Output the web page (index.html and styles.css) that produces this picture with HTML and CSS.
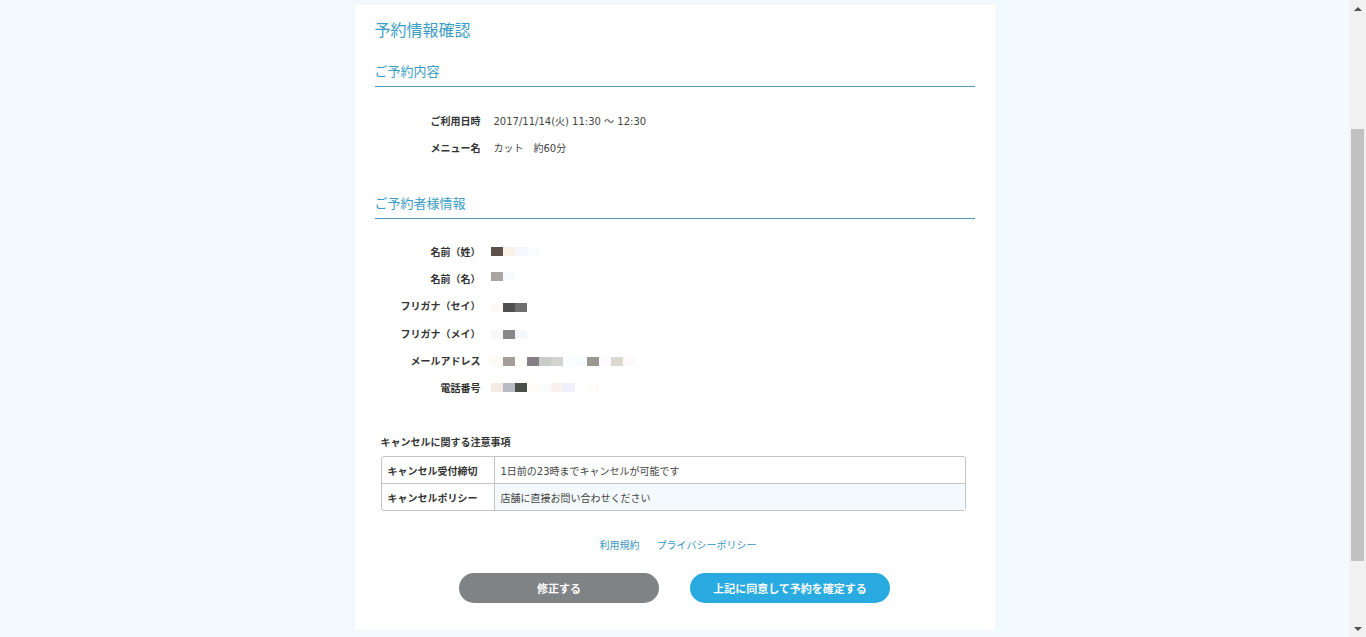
FILE: index.html
```html
<!DOCTYPE html>
<html lang="ja">
<head>
    <meta charset="UTF-8">
    <meta name="viewport" content="width=device-width, initial-scale=1.0">
    <title>予約情報確認</title>
    <link rel="stylesheet" href="styles.css">
</head>
<body>
    <div class="page">
        <div class="card">
            <h1>予約情報確認</h1>

            <h2>ご予約内容</h2>
            <dl class="info">
                <div class="row"><dt>ご利用日時</dt><dd>2017/11/14(火) 11:30 ～ 12:30</dd></div>
                <div class="row"><dt>メニュー名</dt><dd>カット　約60分</dd></div>
            </dl>

            <h2 class="second">ご予約者様情報</h2>
            <dl class="info customer">
                <div class="row"><dt>名前（姓）</dt><dd><span class="mosaic"><i style="background:#5b514a"></i><i style="background:#faf2e6"></i><i style="background:#f4f7fc"></i><i style="background:#fafbfd"></i></span></dd></div>
                <div class="row"><dt>名前（名）</dt><dd><span class="mosaic high"><i style="background:#aaa5a1"></i><i style="background:#f8fafc"></i></span></dd></div>
                <div class="row"><dt>フリガナ（セイ）</dt><dd><span class="mosaic low"><i style="background:#fbfaf8"></i><i style="background:#505050"></i><i style="background:#6f6f6f"></i></span></dd></div>
                <div class="row"><dt>フリガナ（メイ）</dt><dd><span class="mosaic low"><i style="background:#f8f8fa"></i><i style="background:#888888"></i><i style="background:#f3f6fa"></i></span></dd></div>
                <div class="row"><dt>メールアドレス</dt><dd><span class="mosaic low"><i style="background:#fdf9f3"></i><i style="background:#a59e98"></i><i style="background:#fffdf8"></i><i style="background:#847f84"></i><i style="background:#c9ccc6"></i><i style="background:#d4d4d0"></i><i style="background:#fcfdfe"></i><i style="background:#f8fbfd"></i><i style="background:#9a9791"></i><i style="background:#fdfbfd"></i><i style="background:#dcd8cf"></i><i style="background:#fcf8fb"></i></span></dd></div>
                <div class="row"><dt>電話番号</dt><dd><span class="mosaic"><i style="background:#f6ece3"></i><i style="background:#b9bac6"></i><i style="background:#4b4f47"></i><i style="background:#fffcf5"></i><i style="background:#fafcfc"></i><i style="background:#fbf2ef"></i><i style="background:#eef0fc"></i><i style="background:#ffffff"></i><i style="background:#fdfcfa"></i></span></dd></div>
            </dl>

            <div class="notice">
                <h3>キャンセルに関する注意事項</h3>
                <table class="cancel">
                    <tr>
                        <th>キャンセル受付締切</th>
                        <td>1日前の23時までキャンセルが可能です</td>
                    </tr>
                    <tr class="alt">
                        <th>キャンセルポリシー</th>
                        <td>店舗に直接お問い合わせください</td>
                    </tr>
                </table>
            </div>

            <div class="links">
                <a href="#">利用規約</a>
                <a href="#">プライバシーポリシー</a>
            </div>

            <div class="buttons">
                <button class="btn back">修正する</button>
                <button class="btn confirm">上記に同意して予約を確定する</button>
            </div>
        </div>
    </div>

    <div class="scrollbar">
        <div class="arrow up"></div>
        <div class="track"><div class="thumb"></div></div>
        <div class="arrow down"></div>
    </div>
</body>
</html>
```

FILE: styles.css
```css
body {
    margin: 0;
    height: 637px;
    overflow: hidden;
    display: flex;
    background-color: #f3fafd;
    font-family: "Noto Sans CJK JP", "Noto Sans", sans-serif;
    color: #333;
}
.page {
    flex: 1;
}
.card {
    width: 600px;
    margin: 5px auto 0;
    padding: 12px 20px 27px;
    background-color: #fff;
}
h1 {
    margin: 0;
    font-size: 16px;
    line-height: 24px;
    font-weight: normal;
    color: #3b9dc4;
}
h2 {
    margin: 20px 0 0;
    padding-bottom: 5px;
    font-size: 13px;
    line-height: 20px;
    font-weight: normal;
    color: #3b9dc4;
    border-bottom: 1px solid #4a9bb9;
}
h2.second {
    margin-top: 32px;
}
.info {
    margin: 20px 0 0;
}
.info.customer {
    margin-top: 19px;
}
.row {
    display: flex;
    align-items: center;
    height: 27px;
    font-size: 10px;
}
.customer .row {
    height: 27.2px;
}
dt {
    width: 106px;
    text-align: right;
    font-weight: bold;
    color: #333;
}
dd {
    margin: 0 0 0 13px;
    color: #444;
    font-family: "DejaVu Sans", "Noto Sans CJK JP", sans-serif;
}
.mosaic {
    display: flex;
    margin-left: -3px;
}
.mosaic.low {
    margin-top: 3px;
}
.mosaic.high {
    margin-top: -5px;
}
.mosaic i {
    display: block;
    width: 12px;
    height: 9px;
}
.notice {
    margin: 33px 9px 0 6px;
}
h3 {
    margin: 0 0 6px;
    font-size: 10px;
    line-height: 16px;
    font-weight: bold;
    color: #333;
}
.cancel {
    width: 100%;
    border-collapse: separate;
    border-spacing: 0;
    border: 1px solid #c4c4c4;
    border-radius: 3px;
    font-size: 10px;
}
.cancel th, .cancel td {
    height: 26px;
    padding: 0 6px;
    text-align: left;
    color: #333;
}
.cancel th {
    width: 100px;
    font-weight: bold;
    border-right: 1px solid #c4c4c4;
}
.cancel td {
    color: #444;
    font-family: "DejaVu Sans", "Noto Sans CJK JP", sans-serif;
}
.cancel .alt th, .cancel .alt td {
    border-top: 1px solid #c4c4c4;
}
.cancel .alt td {
    background-color: #f3f9fd;
}
.links {
    margin-top: 26px;
    padding-left: 7px;
    display: flex;
    justify-content: center;
    gap: 17px;
    font-size: 10px;
    line-height: 16px;
}
.links a {
    color: #3a95c2;
    text-decoration: none;
}
.buttons {
    margin-top: 20px;
    display: flex;
    justify-content: center;
    gap: 31px;
}
.btn {
    width: 200px;
    height: 30px;
    border: none;
    border-radius: 15px;
    color: #fff;
    font-family: inherit;
    font-size: 11px;
    font-weight: bold;
    cursor: pointer;
}
.btn.back {
    background-color: #7f8386;
}
.btn.confirm {
    background-color: #29abe2;
}
.scrollbar {
    width: 17px;
    display: flex;
    flex-direction: column;
    background-color: #f1f1f1;
}
.arrow {
    height: 17px;
    display: flex;
    align-items: center;
    justify-content: center;
}
.arrow::before {
    content: "";
    border-left: 4px solid transparent;
    border-right: 4px solid transparent;
}
.arrow.up::before {
    border-bottom: 4px solid #505050;
}
.arrow.down::before {
    border-top: 4px solid #505050;
}
.track {
    flex: 1;
    padding-top: 112px;
}
.thumb {
    height: 432px;
    margin: 0 2px;
    background-color: #c1c1c1;
}
```
